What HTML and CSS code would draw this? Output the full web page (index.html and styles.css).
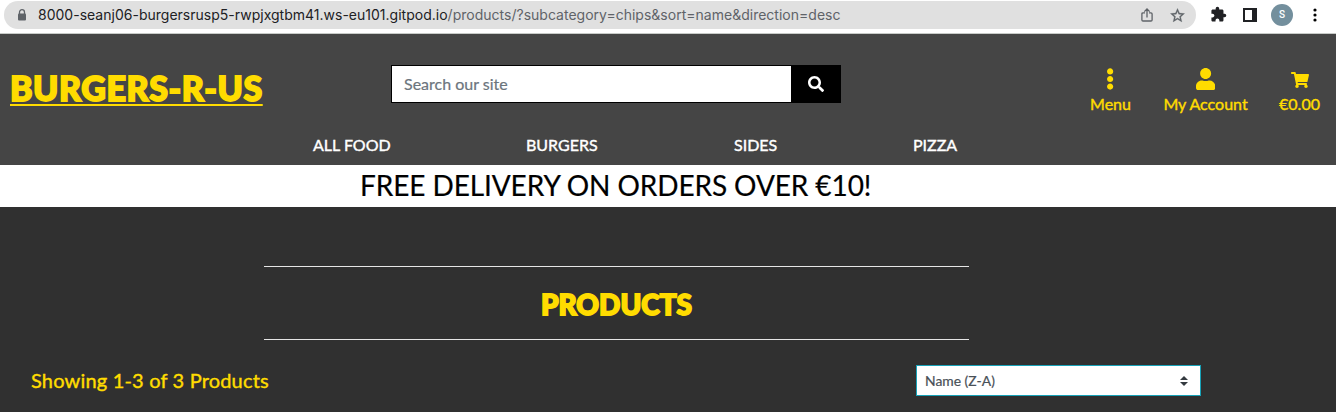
FILE: index.html
```html
<!DOCTYPE html>
<html lang="en">
<head>
<meta charset="utf-8">
<title>Burgers-R-Us</title>
<link rel="stylesheet" href="styles.css">
</head>
<body>
<div class="browser">
  <div class="address">
    <svg class="lock" viewBox="0 0 10 12"><path d="M2.500 5V3.200a2.500 2.500 0 0 1 5 0V5" fill="none" stroke="currentColor" stroke-width="1.300"/><rect x="1" y="4.500" width="8" height="7" rx="1" fill="currentColor"/></svg>
    <span class="url"><span class="host">8000-seanj06-burgersrusp5-rwpjxgtbm41.ws-eu101.gitpod.io</span><span class="path">/products/?subcategory=chips&amp;sort=name&amp;direction=desc</span></span>
    <svg class="share" viewBox="0 0 12 14"><path d="M4 4.800H2Q.9 4.800.9 5.900v6q0 1.100 1.100 1.100h8q1.100 0 1.100-1.100v-6q0-1.100-1.100-1.100H8M6 9.500V1.200M3.300 3.600 6 1l2.700 2.600" fill="none" stroke="currentColor" stroke-width="1.300"/></svg>
    <svg class="star" viewBox="0 0 24 24"><path fill="currentColor" stroke="currentColor" stroke-width=".4" d="m22 9.240-7.190-.62L12 2 9.190 8.630 2 9.240l5.460 4.730L5.820 21 12 17.270 18.180 21l-1.630-7.030L22 9.240zM12 15.400l-3.760 2.270 1-4.280-3.320-2.880 4.380-.38L12 6.100l1.710 4.040 4.380.38-3.320 2.880 1 4.280L12 15.400z"/></svg>
  </div>
  <svg class="puzzle" viewBox="0 0 24 24"><path fill="currentColor" d="M20.500 11H19V7c0-1.100-.9-2-2-2h-4V3.500a2.500 2.500 0 0 0-5 0V5H4c-1.100 0-1.990.9-1.990 2v3.800H3.500c1.490 0 2.700 1.210 2.700 2.700s-1.210 2.700-2.700 2.700H2V20c0 1.100.9 2 2 2h3.800v-1.500c0-1.490 1.210-2.700 2.700-2.700s2.700 1.210 2.700 2.700V22H17c1.100 0 2-.9 2-2v-4h1.500a2.500 2.500 0 0 0 0-5z"/></svg>
  <span class="panel"></span>
  <span class="avatar">S</span>
  <svg class="kebab" viewBox="0 0 4 14"><circle cx="2" cy="2" r="1.600"/><circle cx="2" cy="7" r="1.600"/><circle cx="2" cy="12" r="1.600"/></svg>
</div>
<header class="header">
  <a class="logo">BURGERS-R-US</a>
  <div class="search">
    <span class="field">Search our site</span>
    <span class="submit"><svg viewBox="0 0 512 512"><path fill="currentColor" d="M505 442.700L405.300 343c-4.500-4.500-10.600-7-17-7H372c27.600-35.300 44-79.700 44-128C416 93.100 322.900 0 208 0S0 93.100 0 208s93.100 208 208 208c48.300 0 92.700-16.400 128-44v16.300c0 6.400 2.500 12.500 7 17l99.700 99.700c9.400 9.400 24.600 9.400 33.900 0l28.300-28.300c9.400-9.400 9.400-24.600.1-34zM208 336c-70.700 0-128-57.200-128-128 0-70.700 57.200-128 128-128 70.700 0 128 57.200 128 128 0 70.700-57.200 128-128 128z"/></svg></span>
  </div>
  <div class="actions">
    <a class="action menu"><svg viewBox="0 0 192 512"><path fill="currentColor" d="M96 184c39.800 0 72 32.200 72 72s-32.200 72-72 72-72-32.200-72-72 32.200-72 72-72zM24 80c0 39.800 32.200 72 72 72s72-32.200 72-72S135.800 8 96 8 24 40.200 24 80zm0 352c0 39.800 32.200 72 72 72s72-32.200 72-72-32.200-72-72-72-72 32.200-72 72z"/></svg><span>Menu</span></a>
    <a class="action account"><svg viewBox="0 0 448 512"><path fill="currentColor" d="M224 256c70.700 0 128-57.300 128-128S294.700 0 224 0 96 57.300 96 128s57.300 128 128 128zm89.600 32h-16.700c-22.200 10.200-46.900 16-72.900 16s-50.600-5.800-72.900-16h-16.700C60.200 288 0 348.200 0 422.400V464c0 26.500 21.500 48 48 48h352c26.500 0 48-21.500 48-48v-41.600c0-74.200-60.200-134.400-134.400-134.400z"/></svg><span>My Account</span></a>
    <a class="action cart"><svg viewBox="0 0 576 512"><path fill="currentColor" d="M528.100 301.300l47.300-208C578.800 78.300 567.400 64 552 64H159.200l-9.200-44.800C147.800 8 137.900 0 126.500 0H24C10.700 0 0 10.700 0 24v16c0 13.300 10.700 24 24 24h69.900l70.200 343.400C147.300 417.100 136 435.200 136 456c0 30.900 25.100 56 56 56s56-25.100 56-56c0-15.700-6.400-29.800-16.800-40h209.600C430.400 426.200 424 440.300 424 456c0 30.900 25.100 56 56 56s56-25.100 56-56c0-22.200-12.900-41.300-31.600-50.400l5.500-24.300c3.400-15-8-29.300-23.400-29.300H218.100l-6.500-32h293.100c11.200 0 20.900-7.800 23.400-18.700z"/></svg><span>€0.00</span></a>
  </div>
</header>
<nav class="nav"><a class="n1">ALL FOOD</a><a class="n2">BURGERS</a><a class="n3">SIDES</a><a class="n4">PIZZA</a></nav>
<div class="banner"><span>FREE DELIVERY ON ORDERS OVER €10!</span></div>
<main class="main">
  <div class="heading"><h2>PRODUCTS</h2></div>
  <div class="toolbar">
    <span class="count">Showing 1-3 of 3 Products</span>
    <div class="select"><span>Name (Z-A)</span><svg viewBox="0 0 4 5"><path fill="#343a40" d="M2 0L0 2h4zm0 5L0 3h4z"/></svg></div>
  </div>
</main>
</body>
</html>
```
FILE: styles.css
```css
* { box-sizing: border-box; }
body { margin: 0; height: 412px; overflow: hidden; background: #303030; font-family: Lato, sans-serif; font-size: 16px; }
svg { display: block; flex: none; }

.browser { display: flex; align-items: center; height: 34px; padding: 0 0 4px 4px; background: #fff; border-bottom: 1px solid #c8cbc8; color: #202124; }
.address { display: flex; align-items: center; width: 1192px; height: 28px; margin-top: 1px; padding: 0 10px 0 13px; border-radius: 14px; background: #e0e0e0; color: #5f6368; }
.lock { width: 10px; height: 12px; margin-right: 11px; }
.url { flex: 1; font: 14px/20px Inter, sans-serif; letter-spacing: .01px; white-space: nowrap; }
.host { color: #202124; }
.share { width: 12px; height: 14px; margin-right: 16px; }
.star { width: 17px; height: 17px; }
.puzzle { width: 17px; height: 17px; margin-left: 14px; }
.panel { width: 14px; height: 14px; margin-left: 16px; border: 2px solid #202124; border-right-width: 5px; }
.avatar { width: 22px; height: 22px; margin-left: 14px; border-radius: 50%; background: #738f9d; color: #fff; font: 500 10px/22px Roboto, sans-serif; text-align: center; }
.kebab { width: 4px; height: 14px; margin-left: 20px; }

.header { display: flex; align-items: flex-start; height: 91px; padding-left: 10px; background: #454545; }
.logo { width: 381px; margin-top: 32px; color: #ffdc00; font-size: 34px; font-weight: 900; line-height: 43px; letter-spacing: .55px; white-space: nowrap; text-decoration: underline; text-decoration-thickness: 2px; text-underline-offset: 3px; text-decoration-skip-ink: none; -webkit-text-stroke: 1.8px #ffdc00; }
.search { display: flex; width: 450px; height: 38px; margin-top: 31px; border: 1px solid #000; background: #fff; }
.field { flex: 1; padding-left: 12px; color: #6c757d; line-height: 36px; -webkit-text-stroke: .2px; }
.submit { display: grid; place-items: center; width: 49px; background: #000; color: #fff; }
.submit svg { width: 16px; height: 16px; }
.actions { display: flex; margin: 34px 0 0 249px; color: #ffdc00; }
.action { display: flex; flex-direction: column; align-items: center; white-space: nowrap; line-height: 24px; -webkit-text-stroke: .4px; }
.action svg { height: 22px; margin-bottom: 2px; }
.menu { width: 41px; margin-right: 32px; }
.account { width: 85px; margin-right: 31px; }
.cart { width: 41px; }
.action.cart svg { width: 18px; height: 16px; margin: 4px 0; }

.nav { display: flex; height: 40px; padding-left: 313px; background: #454545; color: #fff; line-height: 40px; white-space: nowrap; -webkit-text-stroke: .4px; }
.n1 { width: 213px; }
.n2 { width: 208px; }
.n3 { width: 179px; }

.banner { height: 42px; padding-left: 360px; background: #fff; color: #000; font-size: 28px; line-height: 40px; letter-spacing: -.09px; white-space: nowrap; -webkit-text-stroke: .2px; }

.main { padding-top: 59px; color: #ffdc00; }
.heading { width: 705px; height: 74px; margin-left: 264px; border: solid #e5e5e5; border-width: 1px 0; }
.heading h2 { margin: 0; font-size: 28px; font-weight: 900; line-height: 75px; text-align: center; -webkit-text-stroke: 1.8px #ffdc00; }
.toolbar { display: flex; align-items: center; height: 31px; margin-top: 25px; padding-left: 31px; }
.count { width: 885px; padding-bottom: 2px; font-size: 20px; letter-spacing: .18px; -webkit-text-stroke: .4px; }
.select { display: flex; align-items: center; justify-content: space-between; width: 285px; height: 31px; padding: 0 12px 0 8px; border: 1px solid #17a2b8; background: #fff; color: #495057; font-size: 13.9px; -webkit-text-stroke: .2px; }
.select svg { width: 8px; height: 10px; }
```
